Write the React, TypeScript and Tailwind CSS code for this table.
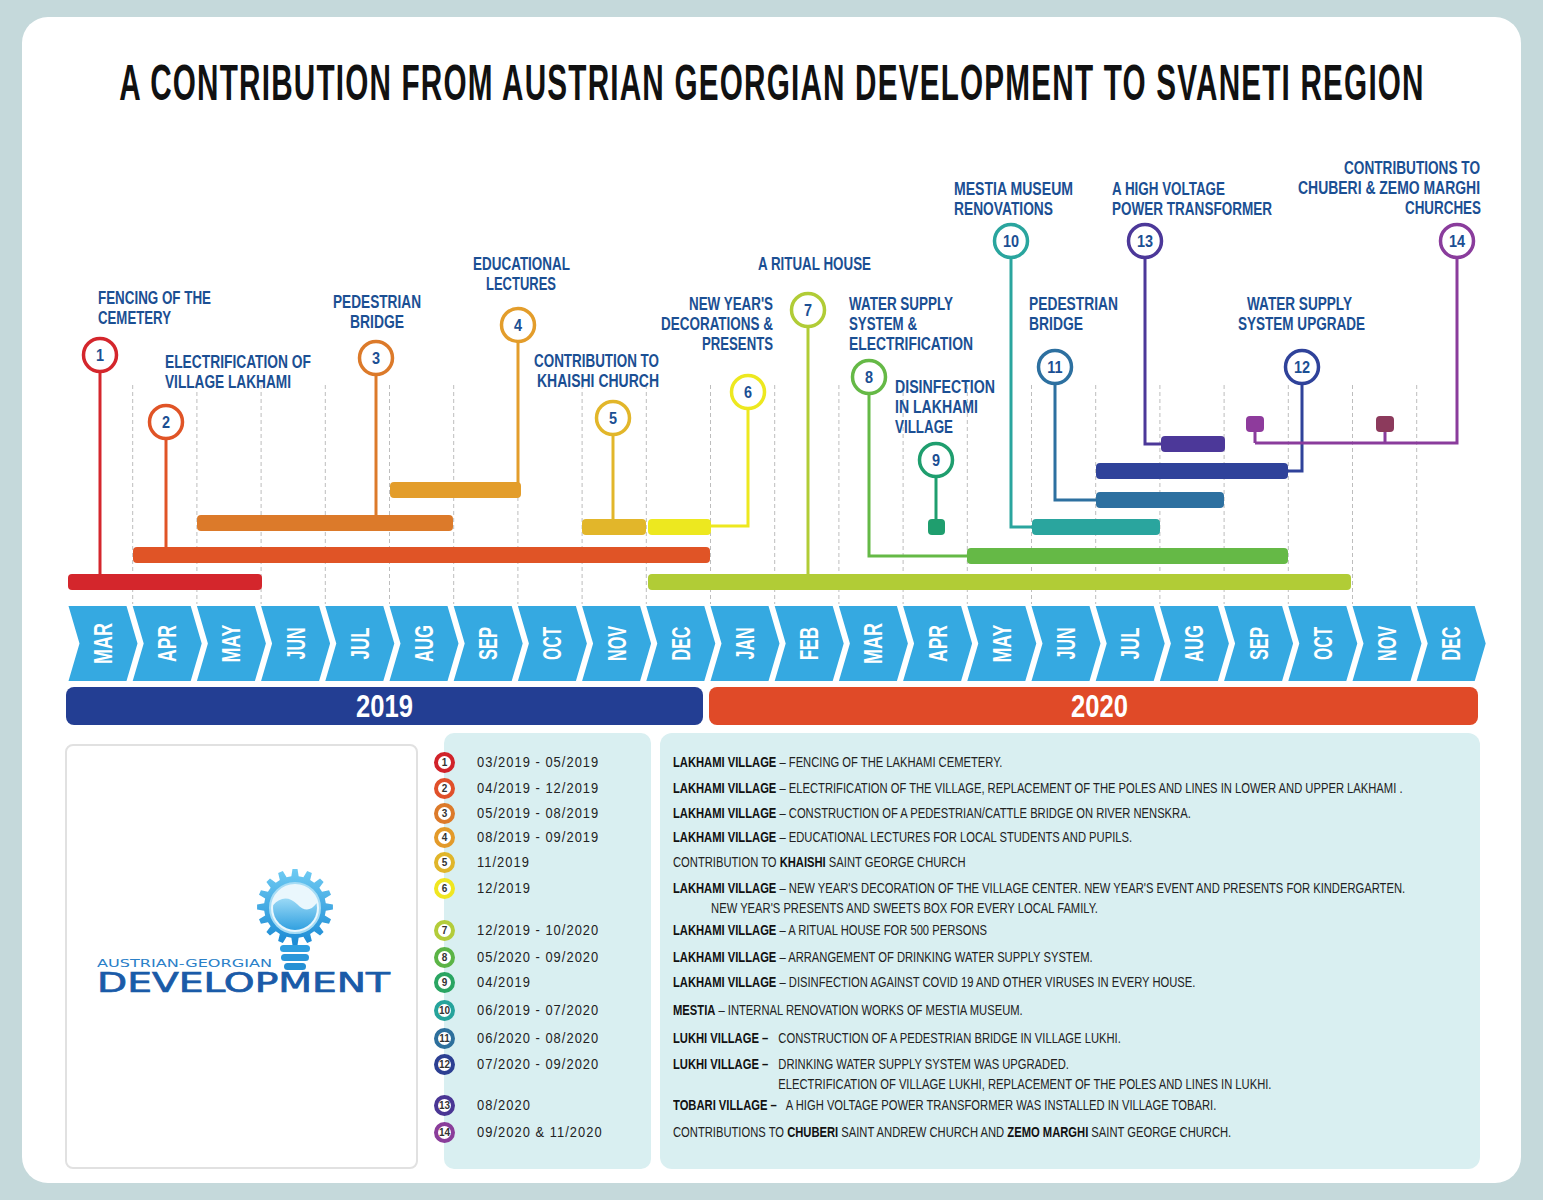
import React from 'react'

const NARROW = "'Liberation Sans Narrow', 'Liberation Sans', Arial, sans-serif"
const BLUE_TEXT = '#1b4f93'
// the labels are set in a condensed face; squeeze the bold sans to match it
const SQUEEZE = 0.74
const MONTH_SQUEEZE = 0.72

// timeline geometry (page coordinates, the svg viewBox uses them directly)
const L0 = 68.5
const W = 64.2
const months = ['MAR', 'APR', 'MAY', 'JUN', 'JUL', 'AUG', 'SEP', 'OCT', 'NOV', 'DEC', 'JAN', 'FEB', 'MAR', 'APR', 'MAY', 'JUN', 'JUL', 'AUG', 'SEP', 'OCT', 'NOV', 'DEC']
const monthLen: Record<string, number> = { MAR: 41, APR: 37, MAY: 38, JUN: 32, JUL: 32, AUG: 37, SEP: 33, OCT: 33, NOV: 35, DEC: 34, JAN: 32, FEB: 33 }

const bars = [
  { x1: 68, x2: 262, y: 574, c: '#d4262c' },
  { x1: 133, x2: 710, y: 547, c: '#e05426' },
  { x1: 197, x2: 453, y: 515, c: '#dc7a2a' },
  { x1: 390, x2: 521, y: 482, c: '#e39d2b' },
  { x1: 582, x2: 646, y: 519, c: '#e2b62a' },
  { x1: 648, x2: 711, y: 519, c: '#ede81f' },
  { x1: 648, x2: 1351, y: 574, c: '#b1cc36' },
  { x1: 967, x2: 1288, y: 548, c: '#65b946' },
  { x1: 928, x2: 945, y: 519, c: '#1f9e6e' },
  { x1: 1032, x2: 1160, y: 519, c: '#2aa59e' },
  { x1: 1096, x2: 1224, y: 492, c: '#2d70a0' },
  { x1: 1096, x2: 1288, y: 463, c: '#2f429a' },
  { x1: 1161, x2: 1225, y: 436, c: '#4c3899' },
  { x1: 1246, x2: 1264, y: 416, c: '#8e3b9c' },
  { x1: 1376, x2: 1394, y: 416, c: '#8c3a5c' },
]

const nodes = [
  { n: 1, cx: 100, cy: 355, c: '#d4262c', d: 'M100 372 V575' },
  { n: 2, cx: 166, cy: 422, c: '#e05426', d: 'M166 439 V548' },
  { n: 3, cx: 376, cy: 358, c: '#dc7a2a', d: 'M376 375 V516' },
  { n: 4, cx: 518, cy: 325, c: '#e39d2b', d: 'M518 342 V483' },
  { n: 5, cx: 613, cy: 418, c: '#e2b62a', d: 'M613 435 V520' },
  { n: 6, cx: 748, cy: 392, c: '#ede81f', d: 'M748 409 V526 H708' },
  { n: 7, cx: 808, cy: 310, c: '#b1cc36', d: 'M808 327 V575' },
  { n: 8, cx: 869, cy: 377, c: '#65b946', d: 'M869 394 V556 H970' },
  { n: 9, cx: 936, cy: 460, c: '#1f9e6e', d: 'M936 477 V520' },
  { n: 10, cx: 1011, cy: 241, c: '#2aa59e', d: 'M1011 258 V527 H1035' },
  { n: 11, cx: 1055, cy: 367, c: '#2d70a0', d: 'M1055 384 V500 H1099' },
  { n: 12, cx: 1302, cy: 367, c: '#2f429a', d: 'M1302 384 V471 H1285' },
  { n: 13, cx: 1145, cy: 241, c: '#4c3899', d: 'M1145 258 V444 H1164' },
  { n: 14, cx: 1457, cy: 241, c: '#8a3c9c', d: 'M1457 258 V443 H1255 M1255 430 V443 M1385 430 V443' },
]

type Label = { t: string; x: number; y: number; len: number }
const labels: Label[] = [
  { t: 'FENCING OF THE', x: 98, y: 304, len: 113 },
  { t: 'CEMETERY', x: 98, y: 324, len: 73 },
  { t: 'ELECTRIFICATION OF', x: 165, y: 368, len: 146 },
  { t: 'VILLAGE LAKHAMI', x: 165, y: 388, len: 126 },
  { t: 'PEDESTRIAN', x: 333, y: 308, len: 88 },
  { t: 'BRIDGE', x: 350, y: 328, len: 54 },
  { t: 'EDUCATIONAL', x: 473, y: 270, len: 97 },
  { t: 'LECTURES', x: 486, y: 290, len: 70 },
  { t: 'CONTRIBUTION TO', x: 534, y: 367, len: 125 },
  { t: 'KHAISHI CHURCH', x: 537, y: 387, len: 122 },
  { t: "NEW YEAR'S", x: 689, y: 310, len: 84 },
  { t: 'DECORATIONS &', x: 661, y: 330, len: 112 },
  { t: 'PRESENTS', x: 702, y: 350, len: 71 },
  { t: 'A RITUAL HOUSE', x: 758, y: 270, len: 113 },
  { t: 'WATER SUPPLY', x: 849, y: 310, len: 104 },
  { t: 'SYSTEM &', x: 849, y: 330, len: 68 },
  { t: 'ELECTRIFICATION', x: 849, y: 350, len: 124 },
  { t: 'DISINFECTION', x: 895, y: 393, len: 100 },
  { t: 'IN LAKHAMI', x: 895, y: 413, len: 83 },
  { t: 'VILLAGE', x: 895, y: 433, len: 58 },
  { t: 'MESTIA MUSEUM', x: 954, y: 195, len: 119 },
  { t: 'RENOVATIONS', x: 954, y: 215, len: 99 },
  { t: 'PEDESTRIAN', x: 1029, y: 310, len: 89 },
  { t: 'BRIDGE', x: 1029, y: 330, len: 54 },
  { t: 'WATER SUPPLY', x: 1247, y: 310, len: 105 },
  { t: 'SYSTEM UPGRADE', x: 1238, y: 330, len: 127 },
  { t: 'A HIGH VOLTAGE', x: 1112, y: 195, len: 113 },
  { t: 'POWER TRANSFORMER', x: 1112, y: 215, len: 160 },
  { t: 'CONTRIBUTIONS TO', x: 1344, y: 174, len: 136 },
  { t: 'CHUBERI & ZEMO MARGHI', x: 1298, y: 194, len: 182 },
  { t: 'CHURCHES', x: 1405, y: 214, len: 76 },
]

const legend = [
  { n: 1, ring: 'border-[#d1232a]', date: '03/2019 - 05/2019', mt: 'mt-[19px]' },
  { n: 2, ring: 'border-[#e0502a]', date: '04/2019 - 12/2019', mt: 'mt-[6px]' },
  { n: 3, ring: 'border-[#dc7a2a]', date: '05/2019 - 08/2019', mt: 'mt-[5px]' },
  { n: 4, ring: 'border-[#e39a2a]', date: '08/2019 - 09/2019', mt: 'mt-[4px]' },
  { n: 5, ring: 'border-[#e0b52a]', date: '11/2019', mt: 'mt-[5px]' },
  { n: 6, ring: 'border-[#f0e620]', date: '12/2019', mt: 'mt-[6px]' },
  { n: 7, ring: 'border-[#b3cc3a]', date: '12/2019 - 10/2020', mt: 'mt-[22px]' },
  { n: 8, ring: 'border-[#5bb446]', date: '05/2020 - 09/2020', mt: 'mt-[7px]' },
  { n: 9, ring: 'border-[#2aa562]', date: '04/2019', mt: 'mt-[5px]' },
  { n: 10, ring: 'border-[#26a39b]', date: '06/2019 - 07/2020', mt: 'mt-[8px]' },
  { n: 11, ring: 'border-[#2d6f9c]', date: '06/2020 - 08/2020', mt: 'mt-[8px]' },
  { n: 12, ring: 'border-[#2c3f92]', date: '07/2020 - 09/2020', mt: 'mt-[6px]' },
  { n: 13, ring: 'border-[#4a3694]', date: '08/2020', mt: 'mt-[21px]' },
  { n: 14, ring: 'border-[#8a3d9a]', date: '09/2020 & 11/2020', mt: 'mt-[7px]' },
]

function gearPath(cx: number, cy: number, ro: number, ri: number, n: number) {
  const s = (Math.PI * 2) / n
  const pts: string[] = []
  for (let i = 0; i < n; i++) {
    const a = i * s - Math.PI / 2
    const p = [
      [ri, a - 0.3 * s],
      [ro, a - 0.17 * s],
      [ro, a + 0.17 * s],
      [ri, a + 0.3 * s],
    ]
    p.forEach(([r, t]) => pts.push(`${(cx + r * Math.cos(t)).toFixed(2)},${(cy + r * Math.sin(t)).toFixed(2)}`))
  }
  return 'M' + pts.join(' L') + ' Z'
}

function Timeline() {
  return (
    <svg width={1499} height={544} viewBox="22 140 1499 544" className="block">
      {Array.from({ length: 21 }, (_, i) => {
        const x = L0 + (i + 1) * W
        return <line key={i} x1={x} x2={x} y1={385} y2={604} stroke="#bdbdbd" strokeWidth={1} strokeDasharray="4 3" />
      })}

      {nodes.map((n) => (
        <path key={n.n} d={n.d} fill="none" stroke={n.c} strokeWidth={3} />
      ))}

      {bars.map((b, i) => (
        <rect key={i} x={b.x1} y={b.y} width={b.x2 - b.x1} height={16} rx={4} fill={b.c} />
      ))}

      {nodes.map((n) => (
        <g key={n.n}>
          <circle cx={n.cx} cy={n.cy} r={16.5} fill="#fff" stroke={n.c} strokeWidth={3.5} />
          <text
            transform={`translate(${n.cx} ${n.cy + 6}) scale(0.85 1)`}
            textAnchor="middle"
            fontFamily={NARROW}
            fontWeight={700}
            fontSize={17}
            fill={BLUE_TEXT}
          >
            {n.n}
          </text>
        </g>
      ))}

      {labels.map((l, i) => (
        <text
          key={i}
          transform={`translate(${l.x} ${l.y}) scale(${SQUEEZE} 1)`}
          textLength={l.len / SQUEEZE}
          lengthAdjust="spacingAndGlyphs"
          fontFamily={NARROW}
          fontWeight={700}
          fontSize={19}
          fill={BLUE_TEXT}
        >
          {l.t}
        </text>
      ))}

      {months.map((m, i) => {
        const L = L0 + i * W
        const cx = L + 34.5
        return (
          <g key={i}>
            <polygon points={`${L},606 ${L + 58},606 ${L + 69},643.5 ${L + 58},681 ${L},681 ${L + 11},643.5`} fill="#35a9e1" />
            <text
              transform={`rotate(-90 ${cx} 643.5) translate(${cx} 652.5) scale(${MONTH_SQUEEZE} 1)`}
              textAnchor="middle"
              textLength={monthLen[m] / MONTH_SQUEEZE}
              lengthAdjust="spacingAndGlyphs"
              fontFamily={NARROW}
              fontWeight={700}
              fontSize={25}
              fill="#fff"
            >
              {m}
            </text>
          </g>
        )
      })}
    </svg>
  )
}

function Logo() {
  return (
    <svg width={320} height={134} viewBox="0 0 320 134">
      <defs>
        <linearGradient id="gearGrad" x1="0" y1="0" x2="0" y2="1">
          <stop offset="0" stopColor="#6fcbf3" />
          <stop offset="1" stopColor="#1b8ad4" />
        </linearGradient>
        <linearGradient id="waterGrad" x1="0" y1="0" x2="0" y2="1">
          <stop offset="0" stopColor="#9ad9f6" />
          <stop offset="1" stopColor="#1e96dc" />
        </linearGradient>
        <clipPath id="bulbClip">
          <circle cx={200} cy={42} r={22} />
        </clipPath>
      </defs>
      <path d={gearPath(200, 41, 38, 31, 16)} fill="url(#gearGrad)" />
      <circle cx={200} cy={42} r={25} fill="#eaf7fd" stroke="#a6dcf5" strokeWidth={2} />
      <g clipPath="url(#bulbClip)">
        <path d="M176 42 C184 30 194 30 202 38 S216 46 224 34 L224 70 L176 70 Z" fill="url(#waterGrad)" />
      </g>
      <rect x={185} y={79} width={30} height={7} rx={3.5} fill="#2f9fe0" />
      <rect x={186} y={88} width={28} height={7} rx={3.5} fill="#2a97da" />
      <rect x={189} y={97} width={22} height={7} rx={3.5} fill="#2590d4" />
      <text x={2} y={101} textLength={175} lengthAdjust="spacingAndGlyphs" fontFamily="'DejaVu Sans', sans-serif" fontSize={11} fill="#2a80c8">
        AUSTRIAN-GEORGIAN
      </text>
      <text x={2} y={126} textLength={293} lengthAdjust="spacingAndGlyphs" fontFamily="'DejaVu Sans', sans-serif" fontSize={26} fill="#1a5ba8" stroke="#1a5ba8" strokeWidth={0.7}>
        DEVELOPMENT
      </text>
    </svg>
  )
}

const B = ({ children }: { children: React.ReactNode }) => <span className="font-bold text-[#111]">{children}</span>

export default function App() {
  return (
    <div className="min-h-screen w-full bg-[#c5d9db] px-[22px] py-[17px]">
      <div className="w-[1499px] h-[1166px] overflow-hidden rounded-[26px] bg-white font-[family-name:'Liberation_Sans_Narrow','Liberation_Sans',Arial,sans-serif]">
        <div className="flex h-[123px] justify-center pt-[44px]">
          <h1 className="shrink-0 whitespace-nowrap text-[50px] leading-[45px] font-bold tracking-[0.04em] text-[#111] scale-x-[0.594]">
            A CONTRIBUTION FROM AUSTRIAN GEORGIAN DEVELOPMENT TO SVANETI REGION
          </h1>
        </div>

        <Timeline />

        <div className="mt-[3px] flex h-[38px]">
          <div className="ml-[44px] flex w-[637px] items-center justify-center rounded-[8px] bg-[#233e93] text-[32px] font-bold leading-[38px] text-white">
            <span className="scale-x-[0.8]">2019</span>
          </div>
          <div className="ml-[6px] flex w-[769px] items-center justify-center rounded-[8px] bg-[#e04a28] pl-[12px] text-[32px] font-bold leading-[38px] text-white">
            <span className="scale-x-[0.8]">2020</span>
          </div>
        </div>

        <div className="mt-[8px] flex h-[436px] items-start">
          <div className="ml-[43px] mt-[11px] h-[425px] w-[353px] rounded-[8px] border-2 border-[#e1e1e1] pl-[28px] pt-[120px]">
            <Logo />
          </div>

          <div className="ml-[26px] flex h-[436px] w-[207px] flex-col rounded-[10px] bg-[#d9eff1]">
            {legend.map((r) => (
              <div key={r.n} className={`${r.mt} flex h-[20px] items-center`}>
                <div className={`-ml-[10px] flex h-[21px] w-[21px] shrink-0 items-center justify-center rounded-full border-[4px] bg-white text-[10px] font-bold text-[#333] ${r.ring}`}>
                  {r.n}
                </div>
                <span className="ml-[22px] origin-left scale-x-[0.86] whitespace-nowrap text-[15px] leading-[20px] tracking-[0.08em] text-[#222]">{r.date}</span>
              </div>
            ))}
          </div>

          <div className="ml-[9px] h-[436px] w-[820px] rounded-[12px] bg-[#d9eff1] pl-[13px]">
            <div className="w-[1098px] origin-left scale-x-[0.747] whitespace-nowrap text-[15px] leading-[20px] text-[#222]">
              <div className="mt-[19px] h-[20px]"><B>LAKHAMI VILLAGE</B> – FENCING OF THE LAKHAMI CEMETERY.</div>
              <div className="mt-[6px] h-[20px]"><B>LAKHAMI VILLAGE</B> – ELECTRIFICATION OF THE VILLAGE, REPLACEMENT OF THE POLES AND LINES IN LOWER AND UPPER LAKHAMI .</div>
              <div className="mt-[5px] h-[20px]"><B>LAKHAMI VILLAGE</B> – CONSTRUCTION OF A PEDESTRIAN/CATTLE BRIDGE ON RIVER NENSKRA.</div>
              <div className="mt-[4px] h-[20px]"><B>LAKHAMI VILLAGE</B> – EDUCATIONAL LECTURES FOR LOCAL STUDENTS AND PUPILS.</div>
              <div className="mt-[5px] h-[20px]">CONTRIBUTION TO <B>KHAISHI</B> SAINT GEORGE CHURCH</div>
              <div className="mt-[6px] h-[40px]">
                <div><B>LAKHAMI VILLAGE</B> – NEW YEAR&apos;S DECORATION OF THE VILLAGE CENTER. NEW YEAR&apos;S EVENT AND PRESENTS FOR KINDERGARTEN.</div>
                <div className="pl-[51px]">NEW YEAR&apos;S PRESENTS AND SWEETS BOX FOR EVERY LOCAL FAMILY.</div>
              </div>
              <div className="mt-[2px] h-[20px]"><B>LAKHAMI VILLAGE</B> – A RITUAL HOUSE FOR 500 PERSONS</div>
              <div className="mt-[7px] h-[20px]"><B>LAKHAMI VILLAGE</B> – ARRANGEMENT OF DRINKING WATER SUPPLY SYSTEM.</div>
              <div className="mt-[5px] h-[20px]"><B>LAKHAMI VILLAGE</B> – DISINFECTION AGAINST COVID 19 AND OTHER VIRUSES IN EVERY HOUSE.</div>
              <div className="mt-[8px] h-[20px]"><B>MESTIA</B> – INTERNAL RENOVATION WORKS OF MESTIA MUSEUM.</div>
              <div className="mt-[8px] flex h-[20px]"><span className="w-[141px] shrink-0"><B>LUKHI VILLAGE –</B></span>CONSTRUCTION OF A PEDESTRIAN BRIDGE IN VILLAGE LUKHI.</div>
              <div className="mt-[6px] h-[40px]">
                <div className="flex"><span className="w-[141px] shrink-0"><B>LUKHI VILLAGE –</B></span>DRINKING WATER SUPPLY SYSTEM WAS UPGRADED.</div>
                <div className="pl-[141px]">ELECTRIFICATION OF VILLAGE LUKHI, REPLACEMENT OF THE POLES AND LINES IN LUKHI.</div>
              </div>
              <div className="mt-[1px] flex h-[20px]"><span className="w-[151px] shrink-0"><B>TOBARI VILLAGE –</B></span>A HIGH VOLTAGE POWER TRANSFORMER WAS INSTALLED IN VILLAGE TOBARI.</div>
              <div className="mt-[7px] h-[20px]">CONTRIBUTIONS TO <B>CHUBERI</B> SAINT ANDREW CHURCH AND <B>ZEMO MARGHI</B> SAINT GEORGE CHURCH.</div>
            </div>
          </div>
        </div>
      </div>
    </div>
  )
}
